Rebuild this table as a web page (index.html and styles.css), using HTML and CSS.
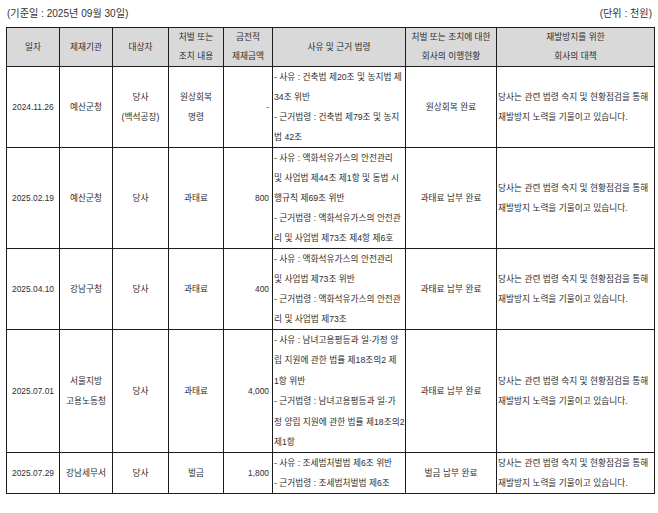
FILE: index.html
```html
<!DOCTYPE html>
<html lang="ko">
<head>
<meta charset="utf-8">
<title>제재 현황</title>
<link rel="stylesheet" href="styles.css">
</head>
<body>
<div class="page">
  <div class="meta">
    <span>(기준일 : 2025년 09월 30일)</span>
    <span>(단위 : 천원)</span>
  </div>
  <table class="sanctions">
    <colgroup>
      <col class="c-date">
      <col class="c-org">
      <col class="c-target">
      <col class="c-type">
      <col class="c-amount">
      <col class="c-reason">
      <col class="c-status">
      <col class="c-plan">
    </colgroup>
    <thead>
      <tr>
        <th>일자</th>
        <th>제재기관</th>
        <th>대상자</th>
        <th>처벌 또는<br>조치 내용</th>
        <th>금전적<br>제재금액</th>
        <th>사유 및 근거 법령</th>
        <th>처벌 또는 조치에 대한<br>회사의 이행현황</th>
        <th>재발방지를 위한<br>회사의 대책</th>
      </tr>
    </thead>
    <tbody>
      <tr class="r1">
        <td class="date">2024.11.26</td>
        <td class="center">예산군청</td>
        <td class="center">당사<br>(백석공장)</td>
        <td class="center">원상회복<br>명령</td>
        <td class="num">-</td>
        <td class="left">- 사유 : 건축법 제20조 및 농지법 제<br>34조 위반<br>- 근거법령 : 건축법 제79조 및 농지<br>법 42조</td>
        <td class="center">원상회복 완료</td>
        <td class="left">당사는 관련 법령 숙지 및 현황점검을 통해<br>재발방지 노력을 기울이고 있습니다.</td>
      </tr>
      <tr class="r2">
        <td class="date">2025.02.19</td>
        <td class="center">예산군청</td>
        <td class="center">당사</td>
        <td class="center">과태료</td>
        <td class="num">800</td>
        <td class="left">- 사유 : 액화석유가스의 안전관리<br>및 사업법 제44조 제1항 및 동법 시<br>행규칙 제69조 위반<br>- 근거법령 : 액화석유가스의 안전관<br>리 및 사업법 제73조 제4항 제6호</td>
        <td class="center">과태료 납부 완료</td>
        <td class="left">당사는 관련 법령 숙지 및 현황점검을 통해<br>재발방지 노력을 기울이고 있습니다.</td>
      </tr>
      <tr class="r3">
        <td class="date">2025.04.10</td>
        <td class="center">강남구청</td>
        <td class="center">당사</td>
        <td class="center">과태료</td>
        <td class="num">400</td>
        <td class="left">- 사유 : 액화석유가스의 안전관리<br>및 사업법 제73조 위반<br>- 근거법령 : 액화석유가스의 안전관<br>리 및 사업법 제73조</td>
        <td class="center">과태료 납부 완료</td>
        <td class="left">당사는 관련 법령 숙지 및 현황점검을 통해<br>재발방지 노력을 기울이고 있습니다.</td>
      </tr>
      <tr class="r4">
        <td class="date">2025.07.01</td>
        <td class="center">서울지방<br>고용노동청</td>
        <td class="center">당사</td>
        <td class="center">과태료</td>
        <td class="num">4,000</td>
        <td class="left">- 사유 : 남녀고용평등과 일·가정 양<br>립 지원에 관한 법률 제18조의2 제<br>1항 위반<br>- 근거법령 : 남녀고용평등과 일·가<br>정 양립 지원에 관한 법률 제18조의2<br>제1항</td>
        <td class="center">과태료 납부 완료</td>
        <td class="left">당사는 관련 법령 숙지 및 현황점검을 통해<br>재발방지 노력을 기울이고 있습니다.</td>
      </tr>
      <tr class="r5">
        <td class="date">2025.07.29</td>
        <td class="center">강남세무서</td>
        <td class="center">당사</td>
        <td class="center">벌금</td>
        <td class="num">1,800</td>
        <td class="left">- 사유 : 조세범처벌법 제6조 위반<br>- 근거법령 : 조세범처벌법 제6조</td>
        <td class="center">벌금 납부 완료</td>
        <td class="left">당사는 관련 법령 숙지 및 현황점검을 통해<br>재발방지 노력을 기울이고 있습니다.</td>
      </tr>
    </tbody>
  </table>
</div>
</body>
</html>
```
FILE: styles.css
```css
html, body {
  margin: 0;
  padding: 0;
  background: #ffffff;
}

body {
  font-family: "Liberation Sans", "Noto Sans CJK KR", sans-serif;
  color: #2e2e2e;
}

.page {
  padding: 0 5px 0 6px;
}

.meta {
  display: flex;
  justify-content: space-between;
  align-items: center;
  height: 25px;
  padding: 0 1px 2px 1px;
  font-size: 10.1px;
  color: #333333;
}

.sanctions {
  border-collapse: collapse;
  table-layout: fixed;
  width: 648px;
  font-size: 8.7px;
  line-height: 20px;
}

.c-date { width: 53px; }
.c-org { width: 53px; }
.c-target { width: 56px; }
.c-type { width: 55px; }
.c-amount { width: 49px; }
.c-reason { width: 133px; }
.c-status { width: 91px; }
.c-plan { width: 158px; }

.sanctions th,
.sanctions td {
  border: 1px solid #1c1c1c;
  padding: 0 2px;
  vertical-align: middle;
  white-space: nowrap;
  overflow: hidden;
}

.sanctions th {
  background: #d9d9d9;
  font-weight: normal;
  text-align: center;
  line-height: 19px;
  height: 38px;
}

.sanctions td.center { text-align: center; }
.sanctions td.date { text-align: center; font-size: 8.4px; }
.sanctions td.left { text-align: left; padding-left: 1px; padding-right: 0; }
.sanctions td.num { text-align: right; padding-right: 3px; font-size: 8.4px; }

.r1 td { height: 80px; }
.r2 td { height: 100px; }
.r3 td { height: 80px; }
.r4 td { height: 122px; }
.r4 td.left { line-height: 20.4px; }
.r5 td { height: 39px; }
```
